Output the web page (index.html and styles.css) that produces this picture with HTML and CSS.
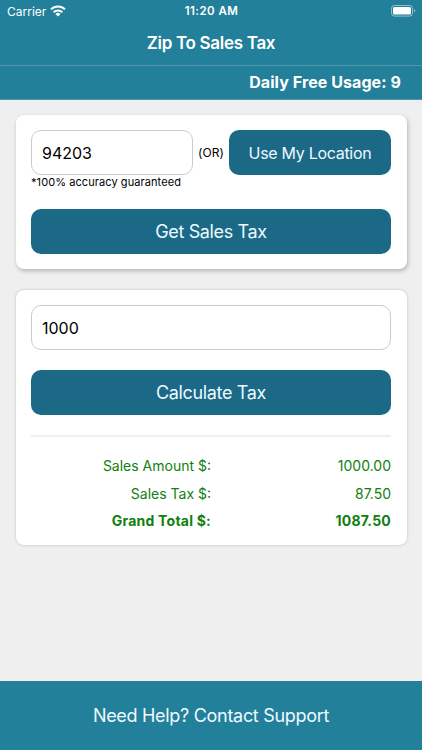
FILE: index.html
```html
<!DOCTYPE html>
<html lang="en">
<head>
  <meta charset="UTF-8" />
  <meta name="viewport" content="width=device-width, initial-scale=1.0" />
  <title>Zip To Sales Tax</title>
  <link rel="stylesheet" href="styles.css">
</head>
<body>
<header>
  <div class="status">
    <div class="carrier">
      <span>Carrier</span>
      <svg width="16" height="12" viewBox="0 0 16 12" fill="none" stroke="#fff" stroke-width="2">
        <path d="M1 4.4a10 10 0 0 1 14 0" />
        <path d="M3.6 7.2a6.3 6.3 0 0 1 8.8 0" />
        <path d="M8 11.4L5.5 8.9a3.6 3.6 0 0 1 5 0z" fill="#fff" stroke="none" />
      </svg>
    </div>
    <span class="time">11:20 AM</span>
    <svg class="battery" width="25" height="12" viewBox="0 0 25 12">
      <rect x="0.5" y="0.5" width="21" height="10.6" rx="3" fill="none" stroke="#fff" stroke-opacity="0.5" />
      <rect x="2" y="2" width="18" height="7.6" rx="1.6" fill="#fff" />
      <path d="M23 4v3.6q1.3-.5 1.3-1.8T23 4z" fill="#fff" fill-opacity="0.5" />
    </svg>
  </div>
  <h1>Zip To Sales Tax</h1>
  <div class="usage"><span>Daily Free Usage: 9</span></div>
</header>
<main>
  <form class="card zip-card">
    <div class="zip-row">
      <input type="text" value="94203" />
      <span class="or">(OR)</span>
      <button type="button" class="location">Use My Location</button>
    </div>
    <p class="note">*100% accuracy guaranteed</p>
    <button type="button">Get Sales Tax</button>
  </form>
  <form class="card tax-card">
    <input type="text" value="1000" />
    <button type="button">Calculate Tax</button>
    <hr>
    <div class="results">
      <div class="row"><span class="label">Sales Amount $:</span><span>1000.00</span></div>
      <div class="row"><span class="label">Sales Tax $:</span><span>87.50</span></div>
      <div class="row total"><span class="label">Grand Total $:</span><span>1087.50</span></div>
    </div>
  </form>
</main>
<footer><a>Need Help? Contact Support</a></footer>
</body>
</html>
```
FILE: styles.css
```css
* {
  box-sizing: border-box;
}

body {
  font-family: Inter, sans-serif;
  background: #efefef;
  display: flex;
  flex-direction: column;
  height: 100vh;
  margin: 0;
}

header {
  background: #23809a;
  color: #fff;
  height: 100px;
  border-bottom: 1px solid #5295a8;
}

.status {
  display: grid;
  grid-template-columns: 1fr auto 1fr;
  align-items: center;
  height: 22px;
  padding: 0 6px 0 7px;
  font-size: 12px;
}

.carrier {
  display: flex;
  align-items: center;
  gap: 4px;
}

.time {
  font-weight: 600;
  font-size: 11.5px;
  letter-spacing: 0.45px;
}

.battery {
  justify-self: end;
}

h1 {
  margin: 0;
  height: 43px;
  line-height: 42px;
  font-size: 17px;
  font-weight: 600;
  letter-spacing: -0.3px;
  text-align: center;
}

.usage {
  border-top: 1px solid #5295a8;
  height: 34px;
  line-height: 33px;
  padding-right: 21px;
  text-align: right;
  font-size: 16px;
  font-weight: 700;
  letter-spacing: 0.08px;
}

main {
  flex: 1;
  padding: 15px 15.5px 0;
}

.card {
  background: #fff;
  border-radius: 8px;
  padding: 15px 15.5px;
}

.zip-card {
  height: 154px;
  margin-bottom: 20.5px;
  box-shadow: 1px 2px 4px rgba(0, 0, 0, 0.25);
}

.tax-card {
  height: 255.5px;
  padding-top: 15.5px;
  box-shadow: 0 0 3px rgba(0, 0, 0, 0.22);
}

.zip-row {
  display: flex;
  align-items: center;
  justify-content: space-between;
}

input {
  display: block;
  width: 100%;
  height: 45px;
  padding: 0 10px;
  border: 1px solid #ccc;
  border-radius: 10px;
  font-family: inherit;
  font-size: 16px;
  color: #000;
}

button {
  display: block;
  width: 100%;
  height: 45px;
  padding: 0;
  background: #1b6987;
  color: #eefaff;
  border: none;
  border-radius: 10px;
  font-family: inherit;
  font-size: 18px;
  letter-spacing: -0.36px;
}

.zip-row input,
.zip-row .location {
  width: 162px;
}

.zip-row .location {
  font-size: 16px;
  letter-spacing: -0.3px;
}

.or {
  font-size: 12px;
  letter-spacing: 0.1px;
}

.note {
  margin: 0 0 19px;
  height: 15px;
  line-height: 15px;
  font-size: 11px;
  letter-spacing: 0.08px;
}

.tax-card button {
  margin-top: 20px;
}

hr {
  height: 2px;
  margin: 20px 0 0;
  border: none;
  background: #efefef;
}

.results {
  padding-top: 15px;
}

.row {
  display: flex;
  justify-content: space-between;
  height: 27.5px;
  line-height: 27px;
  font-size: 14px;
  color: #108010;
}

.label {
  width: 180px;
  text-align: right;
}

.total {
  font-weight: 700;
  letter-spacing: 0.22px;
}

footer {
  background: #23809a;
  height: 69px;
  line-height: 69px;
  text-align: center;
  font-size: 18px;
  letter-spacing: -0.3px;
  color: #eefaff;
}
```
